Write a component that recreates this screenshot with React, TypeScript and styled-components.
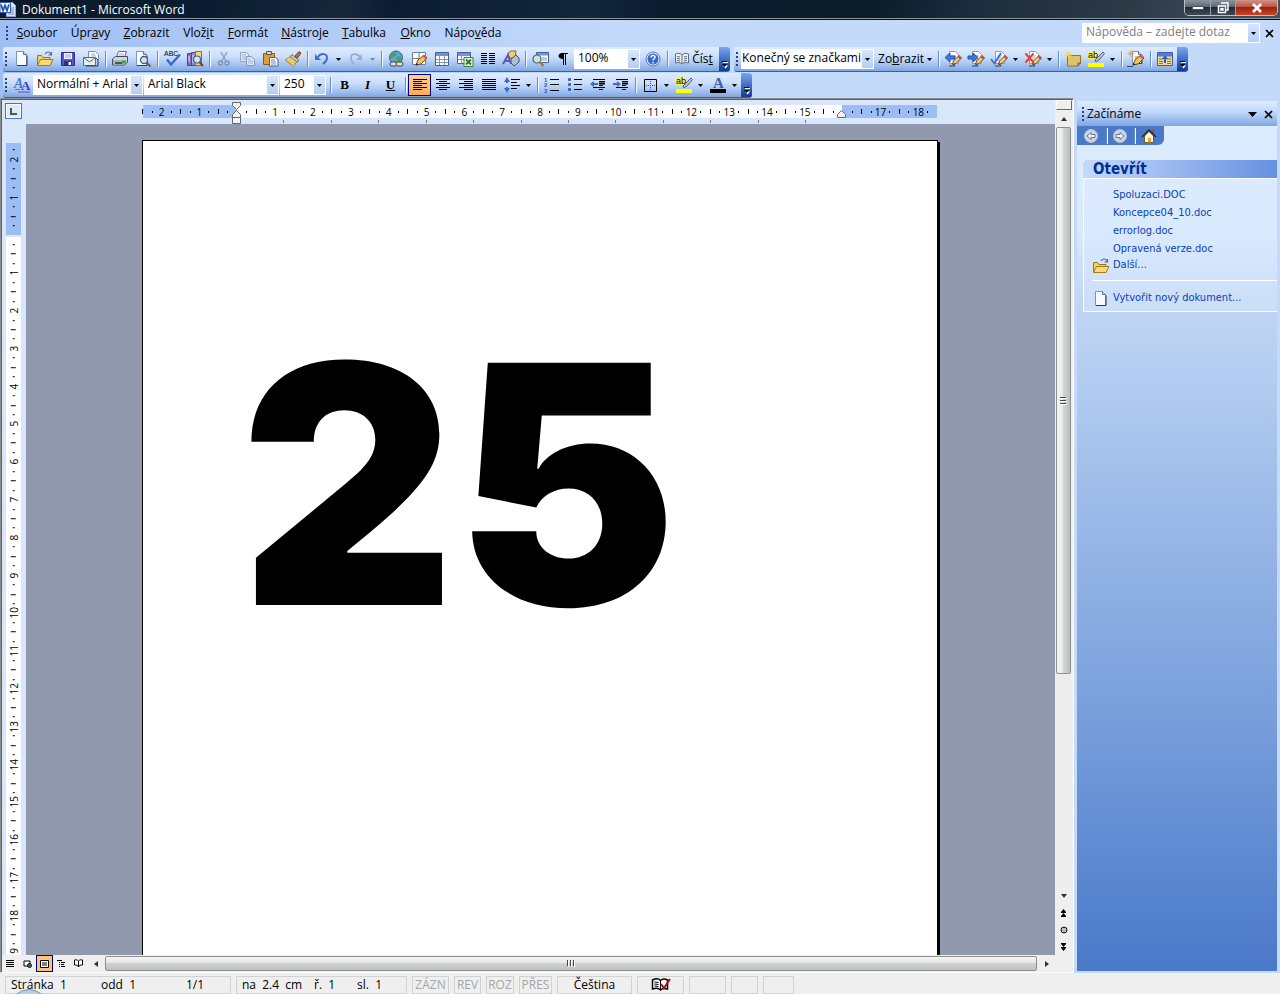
import React from 'react';
import styled, { createGlobalStyle, css } from 'styled-components';

const ui = '"Open Sans", "Noto Sans", sans-serif';
const pane = '"DejaVu Sans Condensed", "DejaVu Sans", sans-serif';

const Global = createGlobalStyle`
  * { box-sizing: border-box; }
  html, body { margin: 0; height: 100%; overflow: hidden; }
  #root { height: 100%; }
  body { font: 12px/16px ${ui}; color: #000; background: #c4dafa; }
  button, input, select { font: inherit; color: inherit; margin: 0; padding: 0; border: 0; background: none; outline: none; }
  button { display: flex; align-items: center; justify-content: center; }
`;

const App_ = styled.div`
  display: flex;
  flex-direction: column;
  height: 100vh;
  overflow: hidden;
  background: linear-gradient(90deg, #9ebef5 0, #c4dafa 640px);
`;

/* ---------- title bar ---------- */
const TitleBar = styled.header`
  flex: none;
  height: 20px;
  display: flex;
  align-items: flex-start;
  gap: 6px;
  padding-right: 2px;
  border-bottom: 1px solid #0a0d12;
  box-shadow: inset 0 -1px #8d949b;
  background: linear-gradient(100deg, #0c1a28 0, #0a1d30 16%, #16283a 27%, #0a1c30 31%, #12273b 46%, #0a1c2e 52%, #0a1b2c 68%, #1b2d3e 76%, #2c3a48 88%, #47525e 100%);
`;
const TitleText = styled.h1`
  flex: 1;
  margin: 0;
  padding-top: 2px;
  font-size: 12px;
  line-height: 16px;
  font-weight: 400;
  color: #fff;
`;
const Caption = styled.div`
  display: flex;
  height: 16px;
  border: 1px solid #b9c0c7;
  border-top: 0;
  border-radius: 0 0 5px 5px;
  overflow: hidden;
`;
const CaptionButton = styled.button<{ $w: number; $close?: boolean }>`
  width: ${p => p.$w}px;
  height: 15px;
  border-left: 1px solid #9aa3ac;
  &:first-child { border-left: 0; }
  background: ${p => p.$close
    ? 'linear-gradient(#d0948a 0, #bd5343 45%, #a11f0d 50%, #c8452a 100%)'
    : 'linear-gradient(#8b949d 0, #5c6772 45%, #1d2a37 50%, #3d4b58 100%)'};
`;

/* ---------- menu ---------- */
const MenuBar = styled.nav`
  flex: none;
  height: 26px;
  display: flex;
  align-items: center;
  padding: 0 3px 0 4px;
`;
const Grip = styled.span`
  flex: none;
  width: 6px;
  height: 15px;
  margin-right: 1px;
  background: radial-gradient(circle at 2px 1px, #27417a 1px, transparent 1px) 1px 0 / 6px 4px repeat-y;
`;
const MenuButton = styled.button<{ $w: number }>`
  width: ${p => p.$w}px;
  height: 20px;
  white-space: nowrap;
  &:first-of-type { margin-left: -1px; }
`;
const Spacer = styled.span`flex: 1;`;
const CloseButton = styled.button`
  width: 16px;
  height: 16px;
`;

/* ---------- toolbars ---------- */
const ToolRow = styled.div`
  flex: none;
  height: 26px;
  display: flex;
  align-items: flex-start;
  gap: 4px;
  padding: 1px 0 0 3px;
`;
const Toolbar = styled.div`
  height: 25px;
  display: flex;
  align-items: center;
  border-radius: 3px;
  overflow: hidden;
  border-bottom: 1px solid #3b619c;
  background: linear-gradient(#deebfe 0, #cbdffb 40%, #a9c6f2 70%, #7fa6e0 100%);
`;
const ToolButton = styled.button<{ $on?: boolean; $wide?: boolean }>`
  flex: none;
  width: ${p => (p.$wide ? 48 : 23)}px;
  height: 22px;
  gap: 3px;
  ${p => p.$on && css`border: 1px solid #000080; background: linear-gradient(#ffd08f, #ffab52);`}
`;
const Letter = styled.span<{ $italic?: boolean; $under?: boolean }>`
  font: bold 13px/16px "Liberation Serif", serif;
  font-style: ${p => (p.$italic ? 'italic' : 'normal')};
  text-decoration: ${p => (p.$under ? 'underline' : 'none')};
`;
const DropButton = styled.button<{ $dim?: boolean }>`
  flex: none;
  width: 11px;
  height: 22px;
  color: ${p => (p.$dim ? '#7f8ba3' : '#000')};
`;
const Sep = styled.span`
  flex: none;
  width: 6px;
  height: 16px;
  background: linear-gradient(90deg, transparent 3px, #6a8ccb 3px, #6a8ccb 4px, #f1f9ff 4px, #f1f9ff 5px, transparent 5px);
`;
const MoreButton = styled.button`
  flex: none;
  width: 11px;
  height: 25px;
  margin-left: 1px;
  padding-bottom: 3px;
  align-items: flex-end;
  background: linear-gradient(#7aa5ee 0, #3f6fc4 50%, #0a3693 100%);
`;
const ComboBox = styled.span<{ $w: number }>`
  flex: none;
  display: grid;
  width: ${p => p.$w}px;
  height: 20px;
  margin-right: 1px;
  background: #fff;
  border: 1px solid #fff;
  & > * { grid-area: 1 / 1; }
`;
const Select = styled.select<{ $tight?: boolean }>`
  appearance: none;
  width: 100%;
  height: 16px;
  padding: 0 10px 0 ${p => (p.$tight ? 0 : 3)}px;
  overflow: hidden;
  text-overflow: clip;
`;
const HelpInput = styled.input`
  width: 100%;
  height: 16px;
  padding-left: 3px;
  &::placeholder { color: #808080; opacity: 1; }
`;
const ComboArrow = styled.span`
  justify-self: end;
  width: 11px;
  height: 18px;
  display: flex;
  align-items: center;
  justify-content: center;
  pointer-events: none;
  background: linear-gradient(#d6e6fc, #b4cff6);
`;
const TextButton = styled.button`
  flex: none;
  width: 60px;
  height: 22px;
  gap: 3px;
`;

/* ---------- work area ---------- */
const Work = styled.div`
  flex: 1;
  min-height: 0;
  display: flex;
`;
const Editor = styled.main`
  flex: 1;
  min-width: 0;
  display: grid;
  grid-template: 24px minmax(0, 1fr) 17px / 24px minmax(0, 1fr) 18px;
  margin: 0 3px 0 0;
  border: 1px solid;
  border-color: #8d8d8d #fff #fff #8d8d8d;
  box-shadow: inset 1px 1px #606060;
  padding: 1px 0 0 1px;
  background: #d8e7fc;
`;
const TabKind = styled.button`
  width: 17px;
  height: 16px;
  margin: 3px 0 0 3px;
  border: 1px solid #4472c4;
  box-shadow: inset 0 0 0 1px #fff;
  background: #dbe9fc;
`;
const HRuler = styled.div`
  overflow: hidden;
  display: flex;
  justify-content: center;
  padding-right: 1px;
`;
const HRulerInner = styled.div`
  flex: none;
  width: 796px;
  padding-top: 5px;
`;
const HBand = styled.div`
  position: relative;
  height: 13px;
  margin: 0 1px;
  background: linear-gradient(90deg, #9dbdf5 94px, #fff 94px, #fff 699px, #9dbdf5 699px);
`;
const HScale = styled.div`
  display: grid;
  grid-template-columns: repeat(85, minmax(0, 1fr));
  margin: 0 -5px;
  height: 13px;
`;
const Mark = styled.span`
  display: flex;
  align-items: center;
  justify-content: center;
  font-size: 10px;
  line-height: 12px;
  white-space: nowrap;
`;
const TickRow = styled(HScale)`
  height: 6px;
`;
const Dot = styled.i`flex: none; width: 1px; height: 2px; background: #000;`;
const Bar = styled.i`flex: none; width: 1px; height: 5px; background: #000;`;
const TabTick = styled.i`flex: none; width: 1px; height: 3px; background: #808080;`;
const Indent = styled.svg<{ $x: number }>`
  position: absolute;
  left: ${p => p.$x}px;
  top: -3px;
`;
const VRuler = styled.div`
  overflow: hidden;
  padding: 19px 5px 0 4px;
`;
const VScale = styled.div`
  display: grid;
  grid-template-rows: repeat(120, minmax(0, 1fr));
  height: 1134px;
  margin-top: -7px;
  background: linear-gradient(#d8e7fc 7px, #9dbdf5 7px, #9dbdf5 99px, #d8e7fc 99px, #d8e7fc 101px, #fff 101px);
`;
const VMark = styled(Mark)`transform: rotate(-90deg);`;
const Desk = styled.div`
  overflow: hidden;
  display: flex;
  justify-content: center;
  align-items: flex-start;
  padding: 16px 1px 0 0;
  background: #9199ae;
`;
const Page = styled.article`
  flex: none;
  width: 796px;
  height: 1123px;
  padding: 94px;
  border: 1px solid #000;
  box-shadow: 2px 2px #000;
  background: #fff;
  outline: none;
`;
const Big = styled.p`
  margin: 0;
  padding: 14px 0 0 3px;
  font: 900 333px/470px Inter, "Arial Black", sans-serif;
`;

/* ---------- scroll bars ---------- */
const VBar = styled.div`
  grid-area: 1 / 3 / 4 / 4;
  display: flex;
  flex-direction: column;
  align-items: center;
  padding-right: 1px;
  background: #efefef;
`;
const SplitBox = styled.span`
  width: 16px;
  height: 10px;
  border: 1px solid;
  border-color: #fff #6b6b6b #6b6b6b #fff;
  background: #efefef;
`;
const ScrollButton = styled.button`
  flex: none;
  width: 17px;
  height: 17px;
`;
const VTrack = styled.div`
  flex: 1;
  width: 15px;
  background: #ececec;
`;
const VThumb = styled.div`
  height: 72%;
  display: flex;
  align-items: center;
  justify-content: center;
  border: 1px solid #8f8f8f;
  border-radius: 2px;
  background: linear-gradient(90deg, #f5f5f5 0, #e8e8ea 45%, #d2d3d5 50%, #bdbec2 100%);
`;
const HBar = styled.div`
  grid-area: 3 / 1 / 4 / 3;
  display: flex;
  align-items: center;
  background: #efefef;
`;
const ViewButton = styled.button<{ $on?: boolean }>`
  flex: none;
  width: 17px;
  height: 17px;
  ${p => p.$on && css`border: 1px solid #000080; background: #ffc27a;`}
`;
const HThumb = styled.div`
  flex: 1;
  height: 15px;
  margin: 0 1px;
  display: flex;
  align-items: center;
  justify-content: center;
  border: 1px solid #8f8f8f;
  border-radius: 2px;
  background: linear-gradient(#f5f5f5 0, #e6e6e6 45%, #d0d1d3 50%, #c0c1c4 100%);
`;

/* ---------- task pane ---------- */
const TaskPane = styled.aside`
  flex: none;
  width: 200px;
  margin: 3px 3px 2px 0;
  display: flex;
  flex-direction: column;
  font: 11px/14px ${pane};
  background: linear-gradient(#deecff 0, #d9e9fe 130px, #c2d6f4 200px, #b4cdf1 270px, #7ba0dc 600px, #4a79c9 100%);
`;
const PaneTitle = styled.div`
  height: 25px;
  display: flex;
  align-items: center;
  padding: 1px 1px 0 3px;
  background: linear-gradient(#deecff 0, #c4dafa 40%, #7fa6e2 100%);
`;
const PaneName = styled.h2`
  flex: 1;
  margin: 0;
  font: 12px/16px ${ui};
`;
const PaneNav = styled.div`
  width: 87px;
  height: 19px;
  display: flex;
  align-items: center;
  padding: 0 4px 0 3px;
  border-radius: 0 0 6px 0;
  background: #4a79c9;
`;
const NavButton = styled.button`width: 23px; height: 18px;`;
const Section = styled.section`
  margin: 15px 0 0 6px;
  border-left: 1px solid #fff;
  border-bottom: 1px solid #fff;
  background: rgba(221, 236, 255, 0.4);
`;
const SectionTitle = styled.h3`
  margin: 0 0 0 -1px;
  height: 19px;
  padding-left: 10px;
  border-bottom: 1px solid #fff;
  border-radius: 4px 0 0 0;
  font: bold 15px/19px ${pane};
  color: #002d96;
  background: linear-gradient(90deg, #c4dafa, #6690e2);
`;
const FileList = styled.ul`
  list-style: none;
  margin: 0;
  padding: 7px 0 0;
`;
const FileRow = styled.li<{ $h: number }>`
  height: ${p => p.$h}px;
  display: flex;
  align-items: center;
`;
const FileIcon = styled.span`
  width: 29px;
  height: 16px;
  padding-left: 8px;
`;
const FileLink = styled.a`color: #0b3fb5; text-decoration: none; white-space: nowrap;`;
const Rule = styled.hr`
  margin: 8px 0 8px 8px;
  border: 0;
  height: 1px;
  background: #fff;
`;

/* ---------- status bar ---------- */
const StatusBar = styled.footer`
  position: relative;
  flex: none;
  height: 21px;
  display: flex;
  gap: 5px;
  padding: 3px 5px 0;
  background: #efefef;
`;
const StatusCell = styled.div<{ $w: number; $dim?: boolean; $center?: boolean }>`
  flex: none;
  display: flex;
  width: ${p => p.$w}px;
  height: 18px;
  padding-left: ${p => (p.$center ? 0 : 5)}px;
  justify-content: ${p => (p.$center ? 'center' : 'flex-start')};
  border: 1px solid #d2d2d2;
  color: ${p => (p.$dim ? '#a5a5a5' : '#000')};
  white-space: pre;
`;
const StatusText = styled.span<{ $w: number }>`width: ${p => p.$w}px;`;
const Orb = styled.svg`
  position: absolute;
  left: 14px;
  bottom: 0;
`;

/* ---------- drawings ---------- */
const I = ({ children, w = 18 }: { children: React.ReactNode; w?: number }) => (
  <svg width={w} height={18} viewBox={`0 0 ${w} 18`} aria-hidden="true">{children}</svg>
);
const Sheet = ({ x = 3, y = 1, w = 11, h = 15 }: { x?: number; y?: number; w?: number; h?: number }) => (
  <>
    <path d={`M${x + .5} ${y + .5}h${w - 4}l3 3v${h - 4}h${-(w - 1)}z`} fill="#f8fbff" stroke="#7f93b5" />
    <path d={`M${x + 1} ${y + h - .5}h${w - 1}v${-(h - 5)}`} fill="none" stroke="#2c3f63" />
    <path d={`M${x + w - 3.5} ${y + .5}v3h3`} fill="#c9d8ee" stroke="#5b7098" />
  </>
);
const Pencil = () => (
  <>
    <path d="M6 15l2-5 6-5 3 3-6 6z" fill="#f6c65a" stroke="#7c4a14" />
    <path d="M12.500 6.500l2-2 2.500 2.500-2 2z" fill="#c9604a" />
    <path d="M5.500 15.500l1-2.500 2 1.500z" fill="#222" />
  </>
);
/* pages with tracked text and a pencil lying across the right side */
const Revision = () => (
  <>
    <path d="M5.500 1.500h6l3 3v9h-9z" fill="#fbfcff" stroke="#8c9ab4" />
    <path d="M7 6h5M7 8h4M7 10h3" stroke="#9fb0cf" />
    <path d="M8.500 14.500l1-3.500 5.500-5.500 2.500 2.500L12 13.500z" fill="#f3c886" stroke="#6d4620" />
    <path d="M13.500 7l1.500-1.500L17.500 8 16 9.500z" fill="#c1503c" />
    <path d="M5 16h6l-2-2.500" fill="none" stroke="#2e3c58" />
  </>
);
const Down = () => <svg width="5" height="3" viewBox="0 0 5 3" aria-hidden="true"><path d="M0 0h5L2.500 3z" fill="currentColor" /></svg>;
const More = () => (
  <svg width="7" height="9" viewBox="0 0 7 9" aria-hidden="true">
    <path d="M1 1.500h5" stroke="#000" /><path d="M2 2.500h5" stroke="#fff" />
    <path d="M2 5.500h5L4.500 8.500z" fill="#fff" /><path d="M1 4h5L3.500 7z" fill="#000" />
  </svg>
);
const Cross = ({ s = 9 }: { s?: number }) => (
  <svg width={s} height={s} viewBox="0 0 9 9" aria-hidden="true"><path d="M1 1l7 7M8 1L1 8" stroke="#000" strokeWidth="1.700" /></svg>
);
const Folder = () => (
  <I>
    <path d="M1.500 15V5.500h4l1.500 2h7V15z" fill="#f2cf6b" stroke="#9c7420" />
    <path d="M1.500 15.500l3-6H17l-3 6z" fill="#fbd878" stroke="#a87b1c" />
    <path d="M9 4c2-3 5-2.500 6 .5M15.500 2v3h-3" fill="none" stroke="#4b6e9e" strokeWidth="1.200" />
  </I>
);
const lines = (xs: [number, number][], y0 = 3, step = 2) =>
  xs.map(([a, b], i) => <path key={i} d={`M${a} ${y0 + i * step + .5}H${b}`} stroke="#000" />);

const icons: Record<string, React.ReactNode> = {
  'new': <I><Sheet /></I>,
  open: <Folder />,
  save: <I><path d="M2.500 2.500h13v13h-13z" fill="#5a55c4" stroke="#2f2c87" /><path d="M5 3h8v6H5z" fill="#f0f3fb" /><path d="M6 5h6M6 7h6" stroke="#9aa5cb" /><path d="M5 11h8v5H5z" fill="#312e7c" /><path d="M9.500 12h2.500v3H9.500z" fill="#fff" /></I>,
  mail: <I><path d="M6.500 7V1.500h7l3 3V10" fill="#fff" stroke="#7b8cab" /><path d="M9 4h4M9 6h5" stroke="#a1aec7" /><path d="M1.500 7.500h12v8h-12z" fill="#e9edf4" stroke="#5e6a80" /><path d="M2 8l5.500 4L13 8" fill="none" stroke="#5e6a80" /><path d="M14 8l2 2v6H4" fill="none" stroke="#2f3a52" /></I>,
  print: <I><path d="M5.500 7l2-5.500h8L13.500 7" fill="#fff" stroke="#61708a" /><path d="M8 4h5M7.500 6h5" stroke="#9eb0cf" /><path d="M1.500 9l3-2.500h12V12l-3 3h-12z" fill="#cfd6e0" stroke="#3f4a5e" /><path d="M2 10h11v4.500H2z" fill="#aab4c4" /><path d="M4 13h7" stroke="#333" strokeWidth="1.500" /><path d="M11 10.500h4v3h-4z" fill="#3aa53a" /></I>,
  preview: <I><Sheet x={2} /><circle cx="10" cy="10" r="3.500" fill="#cfe4fb" stroke="#4c5d7c" strokeWidth="1.300" /><path d="M12.500 12.500l4 4" stroke="#8b5a20" strokeWidth="2.200" /></I>,
  abc: <I><text x="1" y="6" fontFamily="Liberation Sans" fontSize="7" fontWeight="400">ABC</text><path d="M4 9.500l4 5 9-10" fill="none" stroke="#3c66cc" strokeWidth="2.400" /></I>,
  research: <I><path d="M1.500 3.500h4v12h-4z" fill="#8d6fc2" stroke="#553a8c" /><path d="M5.500 2.500h4v13h-4z" fill="#7b8fd4" stroke="#3c4d94" /><path d="M9.500 1.500h6v14h-6z" fill="#f1d584" stroke="#8d7025" /><path d="M3 6v6M7 5v8" stroke="#e8dffa" /><circle cx="11" cy="9.500" r="3.500" fill="#cfe4fb" stroke="#4c5d7c" strokeWidth="1.200" /><path d="M13.500 12l3.500 4" stroke="#6a4a20" strokeWidth="2" /></I>,
  cut: <I><path d="M6 2l5 9M12 2L7 11" stroke="#8e9dbb" strokeWidth="1.400" /><circle cx="5.500" cy="13" r="2" fill="none" stroke="#8392b3" strokeWidth="1.500" /><circle cx="12" cy="13" r="2" fill="none" stroke="#8392b3" strokeWidth="1.500" /></I>,
  copy: <I><path d="M2.500 2.500h6l2 2v7h-8z" fill="#dde7f6" stroke="#93a3c2" /><path d="M8.500 6.500h5l3 3v6h-8z" fill="#dde7f6" stroke="#8594b4" /><path d="M4 5h4M4 7h4M4 9h4M10 9h3M10 11h5M10 13h5" stroke="#a5b4d0" /></I>,
  paste: <I><path d="M2.500 3.500h11v11h-11z" fill="#dd9e38" stroke="#8a5a14" /><path d="M5.500 1.500h5v3h-5z" fill="#d8d8d8" stroke="#555" /><path d="M8.500 7.500h6l2.500 2v6.500H8.500z" fill="#fff" stroke="#4b5f8a" /><path d="M10 10h4M10 12h5M10 14h5" stroke="#6d86b8" /></I>,
  brush: <I><path d="M11 6l4-4.500 2 1.500-3.500 5z" fill="#b07a45" stroke="#70461d" /><path d="M8 4.500l7 6-2 1.500-7-5z" fill="#c9c9d2" stroke="#66666f" /><path d="M6 7l6.500 5-3 4.500L1 10z" fill="#f4dd84" stroke="#a68a30" /><path d="M3 10.500l6 4.500M5 9l6 5" stroke="#c3a545" /></I>,
  undo: <I><path d="M2 4v6h6z" fill="#3c6cd6" /><path d="M5 7c3-4 9-4 9 1 0 3-1.500 4-4 6" fill="none" stroke="#3c6cd6" strokeWidth="2" /></I>,
  redo: <I><path d="M15 4v6H9z" fill="#9aacd0" /><path d="M13 7C10 3 4 3 4 8c0 3 1.500 4 3 6" fill="none" stroke="#9aacd0" strokeWidth="1.800" /></I>,
  link: <I><circle cx="9" cy="7.500" r="6.500" fill="#58a5d8" stroke="#2d5f96" /><path d="M5 3c3-2 5 0 4 2S4 7 3 9C2 6 3 4 5 3zM10 7c3-1 5 0 5 2l-3 3c-2 0-3-3-2-5z" fill="#4ea04a" /><rect x="3" y="12" width="7" height="4" rx="2" fill="#ddd" stroke="#444" /><rect x="9" y="12" width="7" height="4" rx="2" fill="#ddd" stroke="#444" /></I>,
  tables: <I><path d="M2.500 2.500h13v12h-13z" fill="#fff" stroke="#6c7f9e" /><path d="M9 3v11M3 8.500h12" stroke="#6c7f9e" /><Pencil /></I>,
  table: <I><path d="M2.500 2.500h13v13h-13z" fill="#fff" stroke="#49618e" /><path d="M3 3h12v3H3z" fill="#6c95e2" /><path d="M6.500 6v9M11.500 6v9M3 9.500h12M3 12.500h12" stroke="#8296bb" /></I>,
  excel: <I><path d="M1.500 2.500h13v11h-13z" fill="#fff" stroke="#49618e" /><path d="M2 3h12v3H2z" fill="#6c95e2" /><path d="M5.500 6v7M2 9.500h12" stroke="#8296bb" /><path d="M8 7.500h9v9H8z" fill="#e9f6e6" stroke="#3c7f35" /><path d="M10 9.500l5 5M15 9.500l-5 5" stroke="#287a25" strokeWidth="1.800" /></I>,
  columns: <I>{lines([[2, 8], [2, 8], [2, 8], [2, 8], [2, 8], [2, 8]])}{lines([[10, 16], [10, 16], [10, 16], [10, 16], [10, 16], [10, 16]])}</I>,
  drawing: <I><path d="M6 3l3-2h5l-1 7H7z" fill="#f0cf70" stroke="#8d6b1f" /><path d="M9 9l5-4 3 3v4l-5 4-3-3z" fill="#b3bed3" stroke="#48556f" /><path d="M1 14L6 5l3 9M3 11h5" fill="none" stroke="#5c58b8" strokeWidth="2" /></I>,
  docmap: <I><path d="M5.500 2.500h12v10h-12z" fill="#fff" stroke="#49618e" /><path d="M6 3h11v2.500H6z" fill="#6c95e2" /><path d="M11 8h5M11 10h5" stroke="#8296bb" /><circle cx="6" cy="9" r="4" fill="#cde6dd" stroke="#4d6078" strokeWidth="1.200" /><path d="M9 12l3.500 4" stroke="#a4762c" strokeWidth="2.200" /></I>,
  pilcrow: <I><path d="M7 3.500h7M9.500 3v12M11.500 3v12" stroke="#000" /><path d="M9 3C3 2.500 3 9 9 9z" fill="#000" /></I>,
  help: <I><circle cx="9" cy="9" r="7" fill="#e4edfb" stroke="#5575b0" /><circle cx="9" cy="9" r="5.500" fill="#2f6ad8" /><path d="M7 7.500c0-3 4.500-2.500 4 0C10.800 8.800 9 8.800 9 10.500M9 12v1.500" fill="none" stroke="#fff" strokeWidth="1.500" /></I>,
  read: <I w={14}><path d="M.5 4c2-1 5-1 6.500 1 1.500-2 4.500-2 6.500-1v9c-2-.8-5-.8-6.500 1-1.500-1.800-4.500-1.800-6.500-1z" fill="#eef2f8" stroke="#5d6c86" /><path d="M7 5v9M2 6.500l3 .5M2 8.500l3 .5M2 10.500l3 .5M9 7l3-.5M9 9l3-.5M9 11l3-.5" stroke="#5d6c86" /></I>,
  style: <I><text x="1" y="12" fontFamily="Liberation Serif" fontSize="14" fontStyle="italic" fontWeight="700" fill="#4a7ad0">A</text><text x="8" y="14" fontFamily="Liberation Serif" fontSize="13" fontWeight="700" fill="#4c3aae">A</text><path d="M2 13.500h5" stroke="#4a7ad0" /><path d="M5 16h12" stroke="#6b45b5" /></I>,
  left: <I>{lines([[2, 16], [2, 11], [2, 16], [2, 11], [2, 16], [2, 11]])}</I>,
  center: <I>{lines([[2, 16], [5, 13], [2, 16], [5, 13], [2, 16], [5, 13]])}</I>,
  right: <I>{lines([[2, 16], [7, 16], [2, 16], [7, 16], [2, 16], [7, 16]])}</I>,
  justify: <I>{lines([[2, 16], [2, 16], [2, 16], [2, 16], [2, 16], [2, 16]])}</I>,
  spacing: <I><path d="M4 1L1 6h6zM4 17l-3-5h6z" fill="#3c6cc8" /><path d="M4 4v3M4 11v3" stroke="#3c6cc8" strokeWidth="2" />{lines([[8, 17], [8, 14], [8, 17], [8, 14]], 3, 3)}</I>,
  numbers: <I>{[3, 8.500, 14].map((y, i) => <g key={y}><text x="1" y={y + 2.500} fontFamily="Liberation Sans" fontSize="6" fontWeight="700" fill="#3156a8">{i + 1}</text><path d={`M7 ${Math.floor(y)}.500H16`} stroke="#000" /></g>)}</I>,
  bullets: <I>{[3, 8, 13].map(y => <g key={y}><rect x="2" y={y - 1} width="3" height="3" rx="1" fill="#3c62b4" /><path d={`M8 ${y}.500H16`} stroke="#000" /></g>)}</I>,
  outdent: <I>{lines([[4, 16], [10, 16], [10, 16], [10, 14], [4, 16], [10, 14]])}<path d="M10 7.500h6" stroke="#000" strokeWidth="2" /><path d="M1 8l4-3v2h4v2H5v2z" fill="#3c6cc8" /></I>,
  indent: <I>{lines([[4, 16], [10, 16], [10, 16], [10, 14], [4, 16], [10, 14]])}<path d="M10 7.500h6" stroke="#000" strokeWidth="2" /><path d="M9 8L5 5v2H1v2h4v2z" fill="#3c6cc8" /></I>,
  border: <I><path d="M3.500 3.500h12v12h-12z" fill="none" stroke="#000" /><path d="M9.500 5v10M5 9.500h10" stroke="#555" strokeDasharray="1 1" /></I>,
  highlight: <I><path d="M1 1h10v8H1z" fill="#fff35c" /><text x="1" y="8" fontFamily="Liberation Sans" fontSize="9">ab</text><path d="M8 10l4-4 4-4 1.500 1.500L13 9l-4 3z" fill="#b8c4da" stroke="#53607c" /><path d="M1 13h16v4H1z" fill="#ffff00" /></I>,
  color: <I><text x="4" y="11.500" fontFamily="Liberation Serif" fontSize="15" fontWeight="700" fill="#3d5fa8">A</text><path d="M1 13h16v4H1z" fill="#000" /></I>,
  prev: <I><Revision /><path d="M1 7.500l5-4.500v3h5v3H6v3z" fill="#3f78e0" stroke="#2350a8" /></I>,
  next: <I><Revision /><path d="M11 7.500L6 3v3H1v3h5v3z" fill="#3f78e0" stroke="#2350a8" /></I>,
  accept: <I><Revision /><path d="M1 9l3.500 4.500L11 3" fill="none" stroke="#3b6bd8" strokeWidth="1.800" /></I>,
  reject: <I><Revision /><path d="M1.500 3.500l8 9M9.500 3.500l-8 9" stroke="#e0442c" strokeWidth="2" /></I>,
  note: <I><path d="M3.500 5.500h13v7.500l-2.500 3H3.500z" fill="#dcc46a" stroke="#8f7525" /><path d="M14 16v-3h3" fill="none" stroke="#6f5510" /><path d="M4.500 1v8M.5 5h8M2 2.500l5 5M7 2.500l-5 5" stroke="#f8d24a" /></I>,
  track: <I><Sheet x={5} w={10} h={13} /><path d="M8 7h5M8 9h5" stroke="#e0613f" /><Pencil /><path d="M4 0v7M.5 3.500h7M2 1.500l4 4M6 1.500l-4 4" stroke="#f0a22e" /><path d="M0 16.500h6" stroke="#33466e" /></I>,
  panel: <I><path d="M1.500 2.500h15v13h-15z" fill="#f2d98a" stroke="#3b5ea8" /><path d="M2 3h14v3.500H2z" fill="#4f7fdb" /><path d="M3 9h4M3 11.500h4M3 13.500h4M11 9h4M11 11.500h4M11 13.500h4" stroke="#8d7536" /><path d="M9 5l3 4h-2v4H8V9H6z" fill="#2a5ccc" /></I>,
};

type Tool = string | { combo: string; w: number; label: string };
const standard: Tool[] = ['new', 'open', 'save', 'mail', '|', 'print', 'preview', '|', 'abc', 'research', '|', 'cut', 'copy', 'paste', 'brush', '|', 'undo', 'v', 'redo', 'dim', '|', 'link', 'tables', 'table', 'excel', 'columns', 'drawing', '|', 'docmap', 'pilcrow', { combo: '100%', w: 66, label: 'Lupa' }, 'help', '|'];
const review: Tool[] = ['|', 'prev', 'next', 'accept', 'v', 'reject', 'v', '|', 'note', 'highlight', 'v', '|', 'track', '|', 'panel'];
const format: Tool[] = ['style', { combo: 'Normální + Arial', w: 110, label: 'Styl' }, { combo: 'Arial Black', w: 135, label: 'Písmo' }, { combo: '250', w: 46, label: 'Velikost písma' }, '|', 'B', 'I', 'U', '|', 'left', 'center', 'right', 'justify', 'spacing', 'v', '|', 'numbers', 'bullets', 'outdent', 'indent', '|', 'border', 'v', 'highlight', 'v', 'color', 'v'];

const Combo = ({ value, w, label, tight }: { value: string; w: number; label: string; tight?: boolean }) => (
  <ComboBox $w={w}>
    <Select $tight={tight} aria-label={label} defaultValue={value}><option>{value}</option></Select>
    <ComboArrow><Down /></ComboArrow>
  </ComboBox>
);
const Tools = ({ items }: { items: Tool[] }) => (
  <>
    {items.map((t, i) => {
      if (typeof t !== 'string') return <Combo key={i} value={t.combo} w={t.w} label={t.label} />;
      if (t === '|') return <Sep key={i} />;
      if (t === 'v' || t === 'dim') return <DropButton key={i} $dim={t === 'dim'} aria-label="Další možnosti"><Down /></DropButton>;
      if (t.length === 1) return <ToolButton key={i}><Letter $italic={t === 'I'} $under={t === 'U'}>{t}</Letter></ToolButton>;
      return <ToolButton key={i} $on={t === 'left'} aria-label={t}>{icons[t]}</ToolButton>;
    })}
  </>
);

const menus: [string, string, string, number][] = [
  ['', 'S', 'oubor', 54], ['Úpr', 'a', 'vy', 53], ['', 'Z', 'obrazit', 59], ['Vlož', 'i', 't', 45], ['', 'F', 'ormát', 54],
  ['', 'N', 'ástroje', 60], ['', 'T', 'abulka', 58], ['', 'O', 'kno', 45], ['Nápo', 'v', 'ěda', 70],
];

const mark = (k: number) => {
  if (k % 4 === 0) return Math.abs(k / 4);
  return k % 2 === 0 ? <Bar /> : <Dot />;
};
const hMarks = Array.from({ length: 85 }, (_, i) => i - 10);
const vMarks = Array.from({ length: 87 }, (_, i) => i - 10);

const Chevron = ({ d }: { d: string }) => <svg width="8" height="8" viewBox="0 0 8 8" aria-hidden="true"><path d={d} fill="#333" /></svg>;
const NavArrow = ({ back }: { back?: boolean }) => (
  <svg width="14" height="14" viewBox="0 0 14 14" aria-hidden="true">
    <circle cx="7" cy="7" r="6.500" fill="#ced5e2" stroke="#b4bfd2" />
    <path d={back ? 'M3 7l4-3.500v2h4v3H7v2z' : 'M11 7L7 3.500v2H3v3h4v2z'} fill="#eef1f7" stroke="#65789e" />
  </svg>
);

export default function App() {
  return (
    <App_>
      <Global />
      <TitleBar>
        <svg width="16" height="18" viewBox="0 0 16 18" aria-hidden="true">
          <path d="M6.500 2.500h6l3 3v11h-9z" fill="#dbe6fa" stroke="#8ea7d8" /><path d="M10 8h4M10 10h4M10 12h4M8 14h6" stroke="#6f8fcf" />
          <path d="M0 2.500h10.500v10H0z" fill="#f5f9ff" stroke="#2f5cb4" /><path d="M1 4.500l2 6 2-5 2 5 2-6" fill="none" stroke="#234fa8" strokeWidth="1.800" />
        </svg>
        <TitleText>Dokument1 - Microsoft Word</TitleText>
        <Caption>
          <CaptionButton $w={25} aria-label="Minimalizovat"><svg width="12" height="5" viewBox="0 0 12 5"><path d="M.5 1.500h11v3H.5z" fill="#fff" stroke="#4a545e" /></svg></CaptionButton>
          <CaptionButton $w={25} aria-label="Obnovit"><svg width="12" height="12" viewBox="0 0 12 12"><path d="M4 1h7v7H9M1.500 4h7v6.500h-7zM4 6.500h2v1.500H4z" fill="none" stroke="#fff" strokeWidth="1.500" /></svg></CaptionButton>
          <CaptionButton $w={42} $close aria-label="Zavřít"><svg width="12" height="10" viewBox="0 0 12 10"><path d="M2 1l8 8M10 1L2 9" stroke="#fff" strokeWidth="2.800" /></svg></CaptionButton>
        </Caption>
      </TitleBar>

      <MenuBar>
        <Grip />
        {menus.map(([a, u, b, w]) => <MenuButton key={a + u + b} $w={w}><span>{a}<u>{u}</u>{b}</span></MenuButton>)}
        <Spacer />
        <ComboBox $w={178}>
          <HelpInput aria-label="Nápověda" placeholder="Nápověda – zadejte dotaz" />
          <ComboArrow><Down /></ComboArrow>
        </ComboBox>
        <CloseButton aria-label="Zavřít dokument"><Cross /></CloseButton>
      </MenuBar>

      <ToolRow>
        <Toolbar>
          <Grip />
          <Tools items={standard} />
          <ToolButton $wide>{icons.read}<span>Čís<u>t</u></span></ToolButton>
          <MoreButton aria-label="Možnosti panelu nástrojů"><More /></MoreButton>
        </Toolbar>
        <Toolbar>
          <Grip />
          <Combo value="Konečný se značkami" w={133} label="Zobrazení revizí" tight />
          <TextButton><span>Zo<u>b</u>razit</span><Down /></TextButton>
          <Tools items={review} />
          <MoreButton aria-label="Možnosti panelu revizí"><More /></MoreButton>
        </Toolbar>
      </ToolRow>
      <ToolRow>
        <Toolbar>
          <Grip />
          <Tools items={format} />
          <MoreButton aria-label="Možnosti formátování"><More /></MoreButton>
        </Toolbar>
      </ToolRow>

      <Work>
        <Editor>
          <TabKind aria-label="Typ tabulátoru"><svg width="7" height="7" viewBox="0 0 7 7"><path d="M1 0v6h6" fill="none" stroke="#555" strokeWidth="2" /></svg></TabKind>
          <HRuler>
            <HRulerInner>
              <HBand>
                <HScale>
                  {hMarks.map(k => <Mark key={k}>{k === 0 || k === 64 || k === 74 ? null : mark(k)}</Mark>)}
                </HScale>
                <Indent $x={89} width="9" height="22" viewBox="0 0 9 22">
                  <path d="M.5.5h8v3l-4 4-4-4zM.5 15.500v-3l4-4 4 4v3zM.5 15.500h8v6h-8z" fill="#f4f4f4" stroke="#666" />
                </Indent>
                <Indent $x={694} width="9" height="16" viewBox="0 0 9 16">
                  <path d="M.5 15.500v-3l4-4 4 4v3z" fill="#f4f4f4" stroke="#666" />
                </Indent>
              </HBand>
              <TickRow>
                {hMarks.map(k => <Mark key={k}>{k > 0 && k < 64 && k % 5 === 0 ? <TabTick /> : null}</Mark>)}
              </TickRow>
            </HRulerInner>
          </HRuler>
          <VRuler>
            <VScale>
              {vMarks.map(k => <VMark key={k}>{k === 0 || k === -10 ? null : mark(k)}</VMark>)}
            </VScale>
          </VRuler>
          <Desk>
            <Page contentEditable suppressContentEditableWarning spellCheck={false}><Big>25</Big></Page>
          </Desk>
          <VBar>
            <SplitBox />
            <ScrollButton aria-label="Nahoru"><Chevron d="M4 2l3 4H1z" /></ScrollButton>
            <VTrack><VThumb><svg width="7" height="8" viewBox="0 0 7 8"><path d="M0 .5h6M0 3.500h6M0 6.500h6" stroke="#444" /><path d="M0 1.500h7M0 4.500h7M0 7.500h7" stroke="#fff" /></svg></VThumb></VTrack>
            <ScrollButton aria-label="Dolů"><Chevron d="M4 6L1 2h6z" /></ScrollButton>
            <ScrollButton aria-label="Předchozí stránka"><svg width="7" height="8" viewBox="0 0 7 8"><path d="M3.500 0L6 3H1zM3.500 4L6 7H1z" fill="#000" /><path d="M1 3.500h5M1 7.500h5" stroke="#000" /></svg></ScrollButton>
            <ScrollButton aria-label="Vybrat objekt"><svg width="8" height="8" viewBox="0 0 8 8"><circle cx="4" cy="4" r="3" fill="#bbb" stroke="#111" /></svg></ScrollButton>
            <ScrollButton aria-label="Další stránka"><svg width="7" height="8" viewBox="0 0 7 8"><path d="M3.500 4L6 1H1zM3.500 8L6 5H1z" fill="#000" /><path d="M1 .5h5M1 4.500h5" stroke="#000" /></svg></ScrollButton>
            <ScrollButton as="span" />
          </VBar>
          <HBar>
            <ViewButton aria-label="Normální"><svg width="9" height="8" viewBox="0 0 9 8"><path d="M0 .5h8M0 2.500h8M0 4.500h8M0 6.500h8" stroke="#000" /></svg></ViewButton>
            <ViewButton aria-label="Rozvržení webové stránky"><svg width="9" height="8" viewBox="0 0 9 8"><path d="M1 1h6v5H1z" fill="#fff" stroke="#000" /><circle cx="6.500" cy="5.500" r="2" fill="#2c7a4a" stroke="#111" /></svg></ViewButton>
            <ViewButton $on aria-label="Rozvržení při tisku"><svg width="9" height="8" viewBox="0 0 9 8"><path d="M.5.5h8v7h-8z" fill="#fff" stroke="#000" /><path d="M2 3h5M2 5h5" stroke="#000" /></svg></ViewButton>
            <ViewButton aria-label="Osnova"><svg width="9" height="8" viewBox="0 0 9 8"><path d="M0 .5h5M2 2.500h1M4 2.500h4M2 4.500h1M4 4.500h3M2 6.500h1M4 6.500h4" stroke="#000" /></svg></ViewButton>
            <ViewButton aria-label="Rozvržení pro čtení"><svg width="9" height="9" viewBox="0 0 9 9"><path d="M.5 1c2-.5 3 0 4 1 1-1 2-1.500 4-1v5c-2 0-3 0-4 2-1-2-2-2-4-2zM4.500 2v6" fill="#fff" stroke="#000" /></svg></ViewButton>
            <ScrollButton aria-label="Vlevo"><Chevron d="M2 4l4-3v6z" /></ScrollButton>
            <HThumb><svg width="9" height="7" viewBox="0 0 9 7"><path d="M.5 0v6M3.500 0v6M6.500 0v6" stroke="#444" /><path d="M1.500 0v7M4.500 0v7M7.500 0v7" stroke="#fff" /></svg></HThumb>
            <ScrollButton aria-label="Vpravo"><Chevron d="M6 4L2 1v6z" /></ScrollButton>
          </HBar>
        </Editor>

        <TaskPane>
          <PaneTitle>
            <Grip />
            <PaneName>Začínáme</PaneName>
            <CloseButton aria-label="Jiná podokna"><svg width="9" height="5" viewBox="0 0 9 5"><path d="M0 0h9L4.500 5z" /></svg></CloseButton>
            <CloseButton aria-label="Zavřít podokno"><Cross s={9} /></CloseButton>
          </PaneTitle>
          <PaneNav>
            <NavButton aria-label="Zpět"><NavArrow back /></NavButton>
            <Sep />
            <NavButton aria-label="Vpřed"><NavArrow /></NavButton>
            <Sep />
            <NavButton aria-label="Domů">
              <svg width="16" height="16" viewBox="0 0 16 16"><path d="M11 2h2v5h-2z" fill="#b4422c" /><path d="M3.500 8v6.500h9V8L8 3.500z" fill="#fdf7e2" stroke="#6b5b33" /><path d="M1 9l7-7 7 7" fill="none" stroke="#2a2a2a" strokeWidth="1.500" /><path d="M7 10h3v4.500H7z" fill="#e9a63a" /></svg>
            </NavButton>
          </PaneNav>
          <Section>
            <SectionTitle>Otevřít</SectionTitle>
            <FileList>
              {['Spoluzaci.DOC', 'Koncepce04_10.doc', 'errorlog.doc', 'Opravená verze.doc'].map(f => (
                <FileRow key={f} $h={18}><FileIcon /><FileLink href="#">{f}</FileLink></FileRow>
              ))}
              <FileRow $h={14}><FileIcon><Folder /></FileIcon><FileLink href="#">Další...</FileLink></FileRow>
            </FileList>
            <Rule />
            <FileRow as="div" $h={18}><FileIcon><I><Sheet /></I></FileIcon><FileLink href="#">Vytvořit nový dokument...</FileLink></FileRow>
            <FileRow as="div" $h={4} />
          </Section>
        </TaskPane>
      </Work>

      <StatusBar>
        <StatusCell $w={226}><StatusText $w={90}>Stránka  1</StatusText><StatusText $w={85}>odd  1</StatusText><span>1/1</span></StatusCell>
        <StatusCell $w={171}><StatusText $w={72}>na  2.4  cm</StatusText><StatusText $w={43}>ř.  1</StatusText><span>sl.  1</span></StatusCell>
        <StatusCell $w={37} $dim $center>ZÁZN</StatusCell>
        <StatusCell $w={27} $dim $center>REV</StatusCell>
        <StatusCell $w={28} $dim $center>ROZ</StatusCell>
        <StatusCell $w={33} $dim $center>PŘES</StatusCell>
        <StatusCell $w={75} $center>Čeština</StatusCell>
        <StatusCell $w={47} $center>
          <svg width="20" height="15" viewBox="0 0 20 15" aria-hidden="true"><path d="M1.500 3c3-1.500 6-1.500 8 .5 2-2 4-2 7-.5v9c-3-1-5-1-7 1-2-2-5-2-8-1z" fill="#fff" stroke="#000" strokeWidth="1.500" /><path d="M9.500 4v9M3.500 5l4 .5M3.500 7l4 .5M3.500 9l4 .5" stroke="#000" /><path d="M10 7l3 4 6-9" fill="none" stroke="#a01018" strokeWidth="2" /></svg>
        </StatusCell>
        <StatusCell $w={37} />
        <StatusCell $w={27} />
        <StatusCell $w={31} />
        <Orb width="30" height="5" viewBox="0 0 30 5" aria-hidden="true"><path d="M1 6Q15-5 29 6z" fill="#b9cfe0" stroke="#7f98ad" /></Orb>
      </StatusBar>
    </App_>
  );
}
